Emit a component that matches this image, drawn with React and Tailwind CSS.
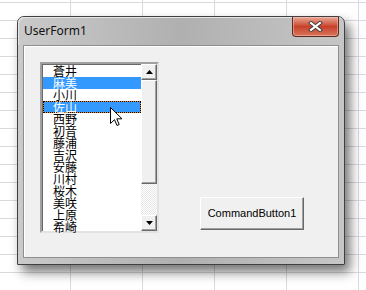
import React from "react";

const names = ["蒼井", "麻美", "小川", "佐山", "西野", "初音", "藤浦", "吉沢", "安藤", "川村", "桜木", "美咲", "上原", "希崎"];

const ListRow = ({ name, index }) => {
  if (index === 3) {
    return (
      <div className="h-[12px] bg-[#e08a30]">
        <div className="h-[12px] border border-dotted border-black bg-[#3399ff] bg-clip-padding pl-[9px] text-white leading-[10px]">
          {name}
        </div>
      </div>
    );
  }
  const selected = index === 1;
  return (
    <div className={`h-[12px] pl-[10px] leading-[12px] ${selected ? "bg-[#3399ff] text-white" : "text-black"}`}>
      {name}
    </div>
  );
};

const ScrollButton = ({ down }) => (
  <div className="h-[16px] border border-t-white border-l-white border-r-[#696969] border-b-[#696969] bg-[#f0f0f0] flex items-center justify-center shadow-[inset_-1px_-1px_0_#a0a0a0]">
    <svg width="7" height="4" viewBox="0 0 7 4">
      {down ? <path d="M0 0H7L3.5 4Z" fill="#000" /> : <path d="M0 4H7L3.5 0Z" fill="#000" />}
    </svg>
  </div>
);

const CloseButton = () => (
  <div className="w-[47px] h-[20px] rounded-b-[4px] border border-t-0 border-[#5b2b22] bg-gradient-to-b from-[#e8a898] via-[#c7412a] to-[#d9735c] flex items-center justify-center shadow-[inset_0_0_0_1px_rgba(255,210,200,0.45)]">
    <svg width="15" height="11" viewBox="0 0 15 11">
      <path d="M3 2L12 9M12 2L3 9" stroke="#3a3a3a" strokeWidth="4" strokeLinecap="square" />
      <path d="M3 2L12 9M12 2L3 9" stroke="#fff" strokeWidth="2.2" strokeLinecap="square" />
    </svg>
  </div>
);

export default function App() {
  return (
    <div className="relative w-[366px] h-[290px] overflow-hidden bg-white bg-[linear-gradient(to_right,#d9dadb_1px,transparent_1px),linear-gradient(to_bottom,#d9dadb_1px,transparent_1px)] bg-[length:72px_18px] bg-[position:70px_2px] pt-[16px] pl-[17px]">
      <div className="w-[328px] h-[249px] rounded-t-[7px] border border-[#404040] bg-gradient-to-r from-[#cacaca] via-[#b0b0b0] to-[#c6c6c6] shadow-[5px_7px_12px_rgba(0,0,0,0.55)] flex flex-col">
        <div className="h-[28px] flex items-start justify-between shadow-[inset_1px_1px_0_#e6e6e6] rounded-t-[6px]">
          <div className="pl-[6px] pt-[6px] text-[12px] leading-[16px] text-[#111] font-['Noto_Sans',sans-serif]">UserForm1</div>
          <div className="pr-[5px]">
            <CloseButton />
          </div>
        </div>
        <div className="flex-1 mx-[5px] mb-[6px] border border-[#8e8e8e] bg-[#f0f0f0] shadow-[inset_1px_1px_0_#ffffff] flex items-start pl-[16px] pt-[16px]">
          <div className="w-[119px] h-[171px] border-2 border-t-[#a0a0a0] border-l-[#a0a0a0] border-r-[#e3e3e3] border-b-[#e3e3e3] bg-white flex shadow-[inset_1px_1px_0_#696969]">
            <div className="flex-1 pt-[1px] pl-[1px] text-[12px] font-['Noto_Sans_CJK_JP',sans-serif]">
              {names.map((n, i) => (
                <ListRow key={n} name={n} index={i} />
              ))}
            </div>
            <div className="w-[16px] flex flex-col">
              <ScrollButton />
              <div className="h-[104px] border border-t-white border-l-white border-r-[#696969] border-b-[#696969] bg-[#f0f0f0] shadow-[inset_-1px_-1px_0_#a0a0a0]" />
              <div className="flex-1 bg-[repeating-conic-gradient(#e6e6e6_0_25%,#ffffff_0_50%)] bg-[length:2px_2px]" />
              <ScrollButton down />
            </div>
          </div>
          <div className="ml-[41px] mt-[135px] w-[104px] h-[33px] border border-t-white border-l-white border-r-[#696969] border-b-[#696969] bg-[#f0f0f0] shadow-[inset_-1px_-1px_0_#a0a0a0] flex items-center justify-center text-[11px] text-black font-['Liberation_Sans',sans-serif]">
            CommandButton1
          </div>
        </div>
      </div>
      <svg className="absolute left-[110px] top-[107px]" width="13" height="20" viewBox="0 0 13 20">
        <path d="M0.5 0.5V16.5L4.5 12.7L7 18.5L9.2 17.5L6.8 11.8H12Z" fill="#fff" stroke="#000" strokeWidth="1" strokeLinejoin="miter" />
      </svg>
    </div>
  );
}
